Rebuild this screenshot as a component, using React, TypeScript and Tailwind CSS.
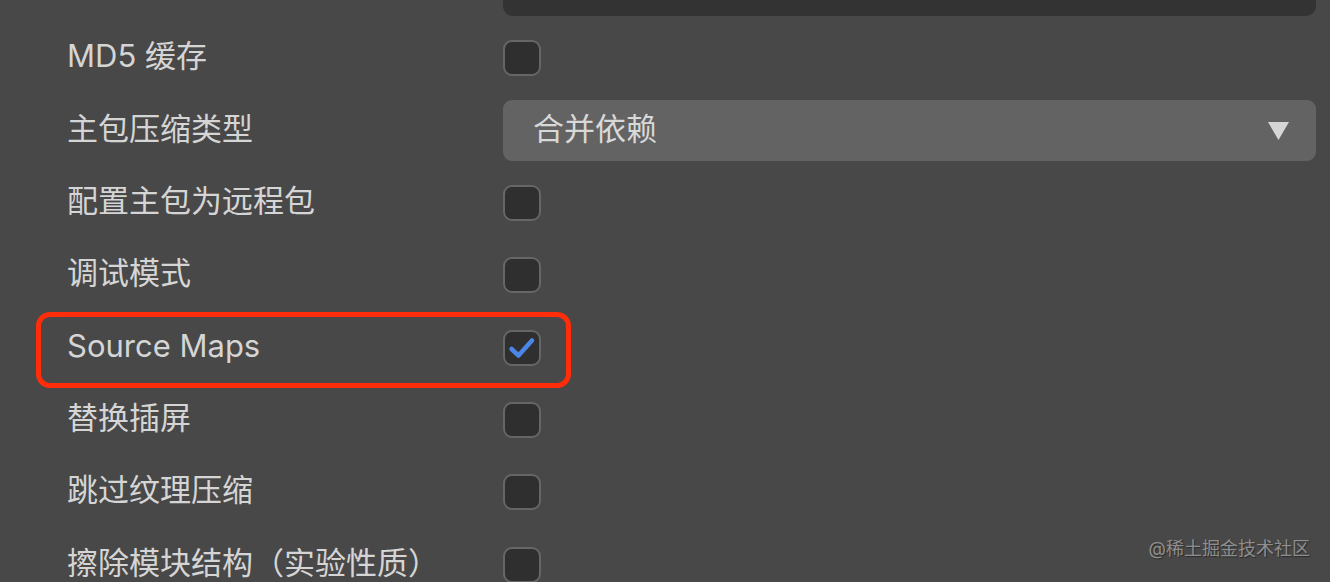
import React from 'react';

const font = { fontFamily: 'Inter, "Noto Sans CJK SC", sans-serif' };

function Checkbox({ checked = false }: { checked?: boolean }) {
  return (
    <div className="w-[38px] h-[36px] rounded-[9px] border-2 border-[#666666] bg-[#2f2f2f] flex items-center justify-center">
      {checked && (
        <svg width="28" height="24" viewBox="0 0 28 24" fill="none">
          <path d="M3.5 13 L10.5 19.5 L24 4.5" stroke="#4a86e8" strokeWidth="4.5" strokeLinecap="round" strokeLinejoin="round" />
        </svg>
      )}
    </div>
  );
}

function Row({ label, children, highlight = false }: { label: string; children: React.ReactNode; highlight?: boolean }) {
  return (
    <div className="h-[72.3px] flex items-center relative">
      {highlight && (
        <div className="absolute left-[36px] w-[535px] top-[1px] bottom-[-4px] border-[5px] border-[#ff2d0a] rounded-[14px]" />
      )}
      <div className="w-[503px] pl-[67px] pb-[5px] text-[31px] text-[#d5d5d5] leading-none whitespace-nowrap">{label}</div>
      <div className="flex-1 pr-[14px] flex items-center">{children}</div>
    </div>
  );
}

export default function App() {
  return (
    <div className="w-[1330px] h-[582px] bg-[#484848] overflow-hidden relative" style={font}>
      <div className="-mt-[50px] flex flex-col">
        <div className="h-[72.3px] flex items-center">
          <div className="w-[503px]" />
          <div className="flex-1 pr-[14px]">
            <div className="h-[60px] rounded-[10px] bg-[#333333]" />
          </div>
        </div>
        <Row label="MD5 缓存">
          <Checkbox />
        </Row>
        <Row label="主包压缩类型">
          <div className="w-full h-[61px] rounded-[9px] bg-[#636363] flex items-center justify-between pl-[30px] pr-[27px]">
            <span className="text-[31px] text-[#d8d8d8] leading-none pb-[5px]">合并依赖</span>
            <svg width="21" height="18" viewBox="0 0 21 18">
              <path d="M0 0 H21 L10.5 18 Z" fill="#d6d6d6" />
            </svg>
          </div>
        </Row>
        <Row label="配置主包为远程包">
          <Checkbox />
        </Row>
        <Row label="调试模式">
          <Checkbox />
        </Row>
        <Row label="Source Maps" highlight>
          <Checkbox checked />
        </Row>
        <Row label="替换插屏">
          <Checkbox />
        </Row>
        <Row label="跳过纹理压缩">
          <Checkbox />
        </Row>
        <Row label="擦除模块结构（实验性质）">
          <Checkbox />
        </Row>
      </div>
      <div className="absolute right-[20px] top-[540px] text-[18px] text-[#8e8e8e] leading-none [text-shadow:1px_1px_1px_#2a2a2a]">
        @稀土掘金技术社区
      </div>
    </div>
  );
}
